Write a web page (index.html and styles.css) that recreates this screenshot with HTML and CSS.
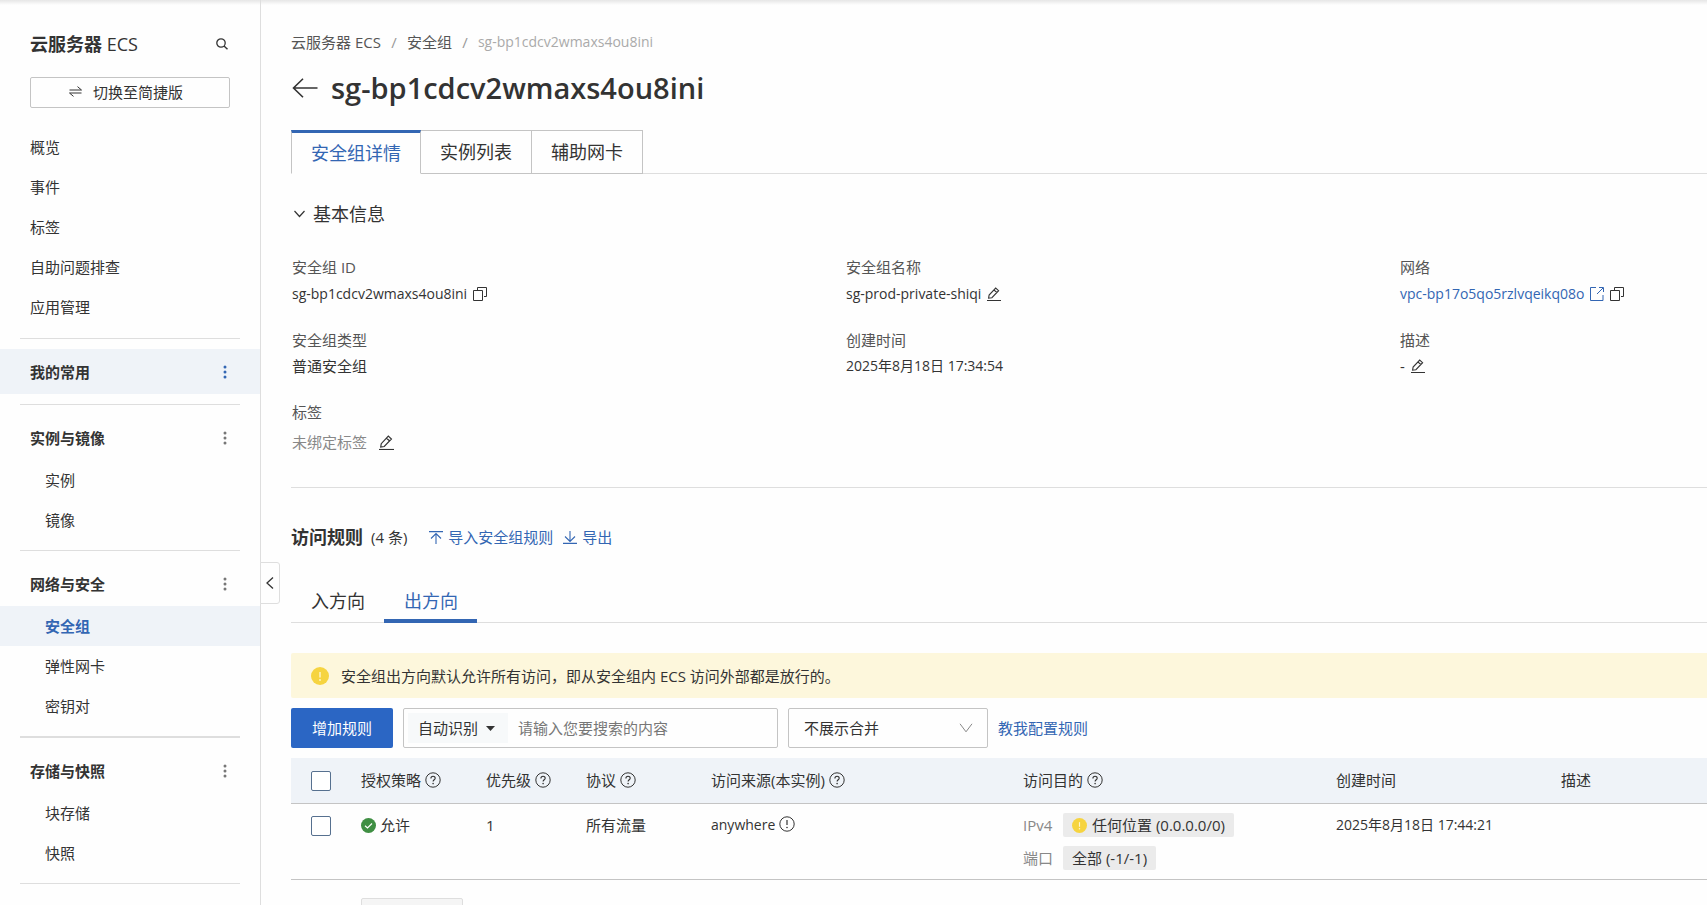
FILE: index.html
```html
<!DOCTYPE html>
<html lang="zh-CN">
<head>
<meta charset="utf-8">
<meta name="viewport" content="width=device-width, initial-scale=1">
<title>安全组详情 - 云服务器 ECS</title>
<link rel="stylesheet" href="styles.css">
</head>
<body>
<svg class="sprite" aria-hidden="true">
  <symbol id="i-copy" viewBox="0 0 14 14"><path d="M.5 3.500h9v10h-9zM4.500 3V.5h9v9H11" fill="none" stroke="currentColor"/></symbol>
  <symbol id="i-edit" viewBox="0 0 14 14"><path d="M0 13.500h14" fill="none" stroke="currentColor"/><path d="M1.600 11.200l.5-3.100 6.600-7 2.900 2.600-6.700 7zM7 3l3 2.600" fill="none" stroke="currentColor" stroke-width="1.100"/></symbol>
  <symbol id="i-open" viewBox="0 0 14 14"><path d="M6 .5H.5v13h12.500V8M9 .5h4.500V5M13 1L7 7" fill="none" stroke="currentColor"/></symbol>
  <symbol id="i-help" viewBox="0 0 16 16"><circle cx="8" cy="8" r="7.200" fill="none" stroke="currentColor"/><path d="M5.900 6.400C5.900 3.500 10.200 3.600 10.200 6.200 10.200 7.700 8.100 7.900 8.100 9.600" fill="none" stroke="currentColor" stroke-width="1.100"/><circle cx="8.100" cy="11.600" r=".8" fill="currentColor"/></symbol>
  <symbol id="i-info" viewBox="0 0 16 16"><circle cx="8" cy="8" r="7.200" fill="none" stroke="currentColor"/><path d="M8 4v5" fill="none" stroke="currentColor" stroke-width="1.200"/><circle cx="8" cy="11.500" r=".8" fill="currentColor"/></symbol>
  <symbol id="i-warn" viewBox="0 0 18 18"><circle cx="9" cy="9" r="9" fill="#f6d440"/><path d="M9 5v5.500" stroke="#fff6cf" stroke-width="1.400"/><circle cx="9" cy="13" r=".9" fill="#fff6cf"/></symbol>
  <symbol id="i-ok" viewBox="0 0 15 15"><circle cx="7.500" cy="7.500" r="7.500" fill="#3f8f43"/><path d="M4 7.700l2.500 2.300L11 5.500" fill="none" stroke="#fff" stroke-width="1.200"/></symbol>
  <symbol id="i-more" viewBox="0 0 4 14"><circle cx="2" cy="2" r="1.500" fill="currentColor"/><circle cx="2" cy="7" r="1.500" fill="currentColor"/><circle cx="2" cy="12" r="1.500" fill="currentColor"/></symbol>
</svg>
<div class="app">
  <aside class="sidebar">
    <header class="side-head">
      <h2 class="side-title"><b>云服务器</b> ECS</h2>
      <button class="icon-btn" type="button" aria-label="搜索"><svg width="12" height="12" viewBox="0 0 12 12"><circle cx="5" cy="5" r="4.200" fill="none" stroke="#333" stroke-width="1.300"/><path d="M8 8l3.500 3.300" stroke="#333" stroke-width="1.400"/></svg></button>
    </header>
    <button class="switch-btn" type="button"><svg width="13" height="11" viewBox="0 0 13 11"><path d="M.5 4h12L8.500.6M12.500 7H.5l4 3.400" fill="none" stroke="#333"/></svg>切换至简捷版</button>
    <nav class="nav">
      <div class="nav-top">
        <a class="nav-item" href="#">概览</a>
        <a class="nav-item" href="#">事件</a>
        <a class="nav-item" href="#">标签</a>
        <a class="nav-item" href="#">自助问题排查</a>
        <a class="nav-item" href="#">应用管理</a>
      </div>
      <hr class="rule">
      <div class="nav-group tinted"><span>我的常用</span><button class="icon-btn blue" type="button" aria-label="更多"><svg width="4" height="14"><use href="#i-more"/></svg></button></div>
      <hr class="rule">
      <div class="nav-group"><span>实例与镜像</span><button class="icon-btn" type="button" aria-label="更多"><svg width="4" height="14"><use href="#i-more"/></svg></button></div>
      <a class="nav-item sub" href="#">实例</a>
      <a class="nav-item sub" href="#">镜像</a>
      <hr class="rule">
      <div class="nav-group"><span>网络与安全</span><button class="icon-btn" type="button" aria-label="更多"><svg width="4" height="14"><use href="#i-more"/></svg></button></div>
      <a class="nav-item sub active" href="#" aria-current="page">安全组</a>
      <a class="nav-item sub" href="#">弹性网卡</a>
      <a class="nav-item sub" href="#">密钥对</a>
      <hr class="rule thick">
      <div class="nav-group"><span>存储与快照</span><button class="icon-btn" type="button" aria-label="更多"><svg width="4" height="14"><use href="#i-more"/></svg></button></div>
      <a class="nav-item sub" href="#">块存储</a>
      <a class="nav-item sub" href="#">快照</a>
      <hr class="rule">
    </nav>
    <button class="collapse" type="button" aria-label="收起"><svg width="8" height="12" viewBox="0 0 8 12"><path d="M7 .5L1 6l6 5.500" fill="none" stroke="#333" stroke-width="1.300"/></svg></button>
  </aside>

  <main class="main">
    <nav class="crumbs" aria-label="面包屑"><a href="#">云服务器 ECS</a><span class="sep">/</span><a href="#">安全组</a><span class="sep">/</span><span class="current latin">sg-bp1cdcv2wmaxs4ou8ini</span></nav>
    <div class="page-title">
      <a href="#" class="back" aria-label="返回"><svg width="26" height="20" viewBox="0 0 26 20"><path d="M25.500 10H1.500M11 .8L1.500 10l9.500 9.200" fill="none" stroke="#333" stroke-width="1.600"/></svg></a>
      <h1>sg-bp1cdcv2wmaxs4ou8ini</h1>
    </div>
    <div class="tabs" role="tablist">
      <button class="tab on" type="button" role="tab" aria-selected="true">安全组详情</button>
      <button class="tab" type="button" role="tab">实例列表</button>
      <button class="tab" type="button" role="tab">辅助网卡</button>
    </div>

    <section class="basic">
      <h3 class="basic-title"><svg width="11" height="8" viewBox="0 0 11 8"><path d="M.5 1l5 5.500L10.500 1" fill="none" stroke="#333" stroke-width="1.200"/></svg>基本信息</h3>
      <dl class="info">
        <div class="field first"><dt>安全组 ID</dt><dd class="latin">sg-bp1cdcv2wmaxs4ou8ini <svg width="14" height="14"><use href="#i-copy"/></svg></dd></div>
        <div class="field first"><dt>安全组名称</dt><dd class="latin">sg-prod-private-shiqi <svg width="14" height="14"><use href="#i-edit"/></svg></dd></div>
        <div class="field first"><dt>网络</dt><dd class="latin"><a href="#">vpc-bp17o5qo5rzlvqeikq08o <svg width="14" height="14"><use href="#i-open"/></svg></a><svg width="14" height="14"><use href="#i-copy"/></svg></dd></div>
        <div class="field"><dt>安全组类型</dt><dd>普通安全组</dd></div>
        <div class="field"><dt>创建时间</dt><dd class="latin">2025年8月18日 17:34:54</dd></div>
        <div class="field"><dt>描述</dt><dd>- <svg width="14" height="14"><use href="#i-edit"/></svg></dd></div>
        <div class="field tags"><dt>标签</dt><dd><span>未绑定标签</span><svg width="15" height="15"><use href="#i-edit"/></svg></dd></div>
      </dl>
    </section>

    <section class="rules">
      <div class="rules-head">
        <h3>访问规则</h3><span class="count">(4 条)</span>
        <a href="#"><svg width="14" height="13" viewBox="0 0 14 13"><path d="M0 .6h14M7 13V2.500M2 7.500l5-5 5 5" fill="none" stroke="currentColor" stroke-width="1.100"/></svg>导入安全组规则</a>
        <a href="#"><svg width="14" height="13" viewBox="0 0 14 13"><path d="M0 12.400h14M7 0v10M2 5.500l5 5 5-5" fill="none" stroke="currentColor" stroke-width="1.100"/></svg>导出</a>
      </div>
      <div class="dir-tabs" role="tablist">
        <button class="dir" type="button" role="tab">入方向</button>
        <button class="dir on" type="button" role="tab" aria-selected="true">出方向</button>
      </div>
      <div class="notice"><svg width="18" height="18"><use href="#i-warn"/></svg><p>安全组出方向默认允许所有访问，即从安全组内 ECS 访问外部都是放行的。</p></div>
      <div class="toolbar">
        <button class="primary" type="button">增加规则</button>
        <div class="search">
          <div class="mode"><select aria-label="搜索类型"><option>自动识别</option></select><svg width="9" height="5" viewBox="0 0 9 5"><path d="M0 0h9L4.500 5z" fill="#333"/></svg></div>
          <input type="text" placeholder="请输入您要搜索的内容" aria-label="搜索规则">
        </div>
        <div class="merge"><select aria-label="合并展示"><option>不展示合并</option></select><svg width="14" height="10" viewBox="0 0 14 10"><path d="M1 .8l6 8 6-8" fill="none" stroke="#888"/></svg></div>
        <a class="guide" href="#">教我配置规则</a>
      </div>
      <table class="grid">
        <colgroup><col class="c-check"><col class="c-policy"><col class="c-prio"><col class="c-proto"><col class="c-src"><col class="c-dst"><col class="c-time"><col></colgroup>
        <thead>
          <tr>
            <th><input type="checkbox" aria-label="全选"></th>
            <th>授权策略 <svg width="16" height="16"><use href="#i-help"/></svg></th>
            <th>优先级 <svg width="16" height="16"><use href="#i-help"/></svg></th>
            <th>协议 <svg width="16" height="16"><use href="#i-help"/></svg></th>
            <th>访问来源(本实例) <svg width="16" height="16"><use href="#i-help"/></svg></th>
            <th>访问目的 <svg width="16" height="16"><use href="#i-help"/></svg></th>
            <th>创建时间</th>
            <th>描述</th>
          </tr>
        </thead>
        <tbody>
          <tr>
            <td><input type="checkbox" aria-label="选择规则"></td>
            <td><svg width="15" height="15"><use href="#i-ok"/></svg> 允许</td>
            <td>1</td>
            <td>所有流量</td>
            <td class="latin">anywhere <svg width="16" height="16"><use href="#i-info"/></svg></td>
            <td>
              <div class="dest"><span class="kind">IPv4</span><span class="chip"><svg width="15" height="15"><use href="#i-warn"/></svg>任何位置 (0.0.0.0/0)</span></div>
              <div class="dest"><span class="kind">端口</span><span class="chip">全部 (-1/-1)</span></div>
            </td>
            <td class="latin">2025年8月18日 17:44:21</td>
            <td></td>
          </tr>
        </tbody>
      </table>
      <div class="bulk"><button class="bulk-btn" type="button" aria-label="批量操作" disabled></button></div>
    </section>
  </main>
</div>
</body>
</html>
```

FILE: styles.css
```css
* { box-sizing: border-box; }

body {
  margin: 0;
  color: #333;
  background: #fefefe;
  font: 15px/20px "Open Sans", "Noto Sans CJK SC", sans-serif;
}

button, input, select { font: inherit; color: inherit; margin: 0; }
button { cursor: pointer; }
a { color: #3366b3; text-decoration: none; }
h1, h2, h3, p, dl, dd { margin: 0; }
svg { flex: none; }
.sprite { position: absolute; width: 0; height: 0; }
.latin { font-size: 14px; }

.app {
  display: flex;
  height: 100vh;
  overflow: hidden;
  background: linear-gradient(#e6e6e6, #fefefe) top / 100% 5px no-repeat;
}

/* Sidebar */
.sidebar {
  position: relative;
  flex: 0 0 261px;
  border-right: 1px solid #dedede;
}
.side-head {
  display: flex;
  align-items: center;
  justify-content: space-between;
  padding: 32px 32px 0 30px;
}
.side-title { font-size: 18px; line-height: 24px; font-weight: 500; }
.icon-btn {
  display: flex;
  padding: 0;
  border: 0;
  background: none;
  color: #777;
}
.icon-btn.blue { color: #3366b3; }
.switch-btn {
  display: flex;
  align-items: center;
  justify-content: center;
  gap: 11px;
  width: 200px;
  height: 31px;
  margin: 21px 30px 19px;
  padding: 0 14px 2px 6px;
  border: 1px solid #c4c4c4;
  border-radius: 2px;
  background: none;
}
.nav-top { padding-bottom: 1px; }
.nav-item {
  display: flex;
  align-items: center;
  height: 40px;
  padding-left: 30px;
  color: #333;
}
.nav-item.sub { padding-left: 45px; }
.nav-item.active { background: #eff3f8; color: #3366b3; font-weight: 600; }
.rule { height: 1px; margin: 10px 20px; border: 0; background: #dedede; }
.rule.thick { height: 2px; }
.nav-group {
  display: flex;
  align-items: center;
  justify-content: space-between;
  height: 45px;
  padding: 0 33px 0 30px;
  font-weight: 600;
}
.tinted { background: #eff3f8; }
.collapse {
  position: absolute;
  top: 562px;
  left: 260px;
  display: flex;
  align-items: center;
  justify-content: center;
  width: 20px;
  height: 42px;
  padding: 0;
  border: 1px solid #dedede;
  border-radius: 0 3px 3px 0;
  background: #fefefe;
}

/* Page heading */
.main { flex: 1; min-width: 0; padding: 32px 0 0 30px; }
.crumbs { display: flex; }
.crumbs a { color: #555; }
.crumbs .sep { width: 26px; text-align: center; color: #999; }
.crumbs .current { color: #aaa; }
.page-title {
  display: flex;
  align-items: center;
  gap: 13px;
  padding: 15px 0 22px 1px;
}
.back { display: flex; }
h1 { font-size: 29px; line-height: 41px; font-weight: 600; }

.tabs { display: flex; height: 44px; border-bottom: 1px solid #dedede; }
.tab {
  height: 44px;
  padding: 0 19px;
  border: 1px solid #c4c4c4;
  border-left: 0;
  background: none;
  font-size: 18px;
}
.tab.on {
  border-left: 1px solid #c4c4c4;
  border-top: 3px solid #3366b3;
  border-bottom-color: #fefefe;
  color: #3366b3;
}

/* Basic information */
.basic { padding: 28px 0 35px 1px; border-bottom: 1px solid #dedede; }
.basic-title {
  display: flex;
  align-items: center;
  gap: 8px;
  padding-left: 2px;
  font-size: 18px;
  line-height: 24px;
  font-weight: 400;
}
.info {
  display: grid;
  grid-template-columns: 554fr 554fr 307fr;
  row-gap: 26px;
  padding-top: 31px;
}
.field { line-height: 20px; }
.field dt { color: #555; }
.field dd { display: flex; align-items: center; gap: 6px; padding-top: 6px; }
.field.first dd { padding-top: 7px; }
.field dd a { display: flex; align-items: center; gap: 6px; }
.field.tags dd { gap: 12px; padding-top: 10px; }
.field.tags span { color: #888; }

/* Access rules */
.rules-head { display: flex; align-items: center; padding-top: 37px; }
.rules-head h3 { font-size: 18px; line-height: 24px; font-weight: 700; }
.rules-head .count { margin: 0 22px 0 8px; }
.rules-head a { display: flex; align-items: center; gap: 5px; margin-right: 10px; }
.dir-tabs { display: flex; height: 44px; margin-top: 30px; border-bottom: 1px solid #dedede; }
.dir {
  height: 44px;
  padding: 4px 19px 0 20px;
  border: 0;
  border-bottom: 4px solid transparent;
  background: none;
  font-size: 18px;
}
.dir.on { border-color: #3366b3; color: #3366b3; }
.notice {
  display: flex;
  align-items: center;
  gap: 12px;
  height: 45px;
  margin-top: 30px;
  padding-left: 20px;
  border-radius: 2px 0 0 2px;
  background: #fdf7dc;
}
.toolbar { display: flex; align-items: center; gap: 10px; margin: 10px 0; }
.primary {
  height: 40px;
  padding: 0 21px;
  border: 0;
  border-radius: 2px;
  background: #2b66c4;
  color: #fff;
}
.search {
  display: flex;
  width: 375px;
  height: 40px;
  padding: 4px;
  border: 1px solid #c4c4c4;
  border-radius: 2px;
}
.mode, .merge { position: relative; display: flex; align-items: center; }
.mode { flex: 0 0 100px; background: #f7f9fa; }
select {
  width: 100%;
  height: 100%;
  border: 0;
  background: none;
  appearance: none;
}
.mode select { padding: 0 10px; }
.mode svg { position: absolute; right: 13px; pointer-events: none; }
.search input {
  flex: 1;
  min-width: 0;
  padding: 0 10px;
  border: 0;
  background: none;
}
.search input::placeholder { color: #777; }
.merge {
  width: 200px;
  height: 40px;
  border: 1px solid #c4c4c4;
  border-radius: 2px;
}
.merge select { padding: 0 15px; }
.merge svg { position: absolute; right: 14px; pointer-events: none; }

.grid { width: 100%; table-layout: fixed; border-collapse: collapse; }
.c-check { width: 50px; }
.c-policy { width: 125px; }
.c-prio { width: 100px; }
.c-proto { width: 125px; }
.c-src { width: 312px; }
.c-dst { width: 313px; }
.c-time { width: 225px; }
.grid th, .grid td {
  padding: 12px 0 12px 20px;
  border-bottom: 1px solid #c4c4c4;
  text-align: left;
  vertical-align: top;
  font-weight: 400;
  white-space: nowrap;
}
.grid th { background: #eff3f8; }
.grid td { padding: 9px 0 9px 20px; line-height: 24px; }
.grid svg { vertical-align: -2px; }
.grid input {
  display: block;
  width: 20px;
  height: 20px;
  margin-top: 1px;
  border: 1px solid #56708f;
  border-radius: 2px;
  background: #fff;
  appearance: none;
}
.grid td input { margin-top: 3px; }
.dest { display: flex; align-items: center; gap: 10px; }
.dest + .dest { margin-top: 9px; }
.kind { width: 30px; color: #888; }
.chip {
  display: flex;
  align-items: center;
  gap: 5px;
  height: 24px;
  padding: 0 9px;
  border-radius: 2px;
  background: #ebebeb;
}
.bulk { padding: 18px 0 0 70px; }
.bulk-btn {
  width: 102px;
  height: 40px;
  border: 1px solid #dedede;
  border-radius: 2px;
  background: #f5f5f5;
}
```
